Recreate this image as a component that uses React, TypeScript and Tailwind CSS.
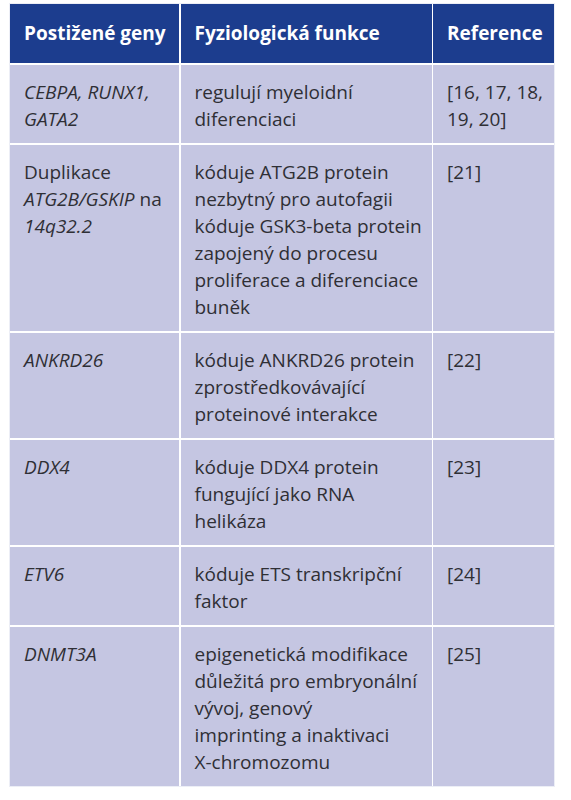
import React from "react";

const rows: { gene: React.ReactNode; func: string[]; ref: string[] }[] = [
  {
    gene: (
      <>
        <i>CEBPA, RUNX1,</i>
        <br />
        <i>GATA2</i>
      </>
    ),
    func: ["regulují myeloidní", "diferenciaci"],
    ref: ["[16, 17, 18,", "19, 20]"],
  },
  {
    gene: (
      <>
        Duplikace
        <br />
        <i>ATG2B/GSKIP</i> na
        <br />
        <i>14q32.2</i>
      </>
    ),
    func: [
      "kóduje ATG2B protein",
      "nezbytný pro autofagii",
      "kóduje GSK3-beta protein",
      "zapojený do procesu",
      "proliferace a diferenciace",
      "buněk",
    ],
    ref: ["[21]"],
  },
  {
    gene: <i>ANKRD26</i>,
    func: ["kóduje ANKRD26 protein", "zprostředkovávající", "proteinové interakce"],
    ref: ["[22]"],
  },
  {
    gene: <i>DDX4</i>,
    func: ["kóduje DDX4 protein", "fungující jako RNA", "helikáza"],
    ref: ["[23]"],
  },
  {
    gene: <i>ETV6</i>,
    func: ["kóduje ETS transkripční", "faktor"],
    ref: ["[24]"],
  },
  {
    gene: <i>DNMT3A</i>,
    func: [
      "epigenetická modifikace",
      "důležitá pro embryonální",
      "vývoj, genový",
      "imprinting a inaktivaci",
      "X-chromozomu",
    ],
    ref: ["[25]"],
  },
];

function Lines({ items }: { items: string[] }) {
  return (
    <>
      {items.map((t, i) => (
        <div key={i} className="whitespace-nowrap">
          {t}
        </div>
      ))}
    </>
  );
}

export default function App() {
  return (
    <div
      className="min-h-[800px] w-[571px] bg-white pl-[9px] pt-[3px]"
      style={{ fontFamily: '"Open Sans", "Noto Sans", sans-serif' }}
    >
      <div className="grid w-fit grid-cols-[169px_251px_121px] gap-[1.5px] border border-[#eceef6] bg-white text-[#2f2f35]">
        <div className="flex h-[59px] items-center bg-[#1c3d8e] pl-[14px] text-[19px] font-bold text-white">
          Postižené geny
        </div>
        <div className="flex h-[59px] items-center bg-[#1c3d8e] pl-[14px] text-[19px] font-bold text-white">
          Fyziologická funkce
        </div>
        <div className="flex h-[59px] items-center bg-[#1c3d8e] pl-[14px] text-[19px] font-bold text-white">
          Reference
        </div>
        {rows.map((r, i) => (
          <React.Fragment key={i}>
            <div className="bg-[#c5c6e2] pl-[14px] pt-[14px] pb-[10.5px] text-[19px] leading-[27px]">
              {r.gene}
            </div>
            <div className="bg-[#c5c6e2] pl-[14px] pt-[14px] pb-[10.5px] text-[19px] leading-[27px]">
              <Lines items={r.func} />
            </div>
            <div className="bg-[#c5c6e2] pl-[14px] pt-[14px] pb-[10.5px] text-[19px] leading-[27px]">
              <Lines items={r.ref} />
            </div>
          </React.Fragment>
        ))}
      </div>
    </div>
  );
}
